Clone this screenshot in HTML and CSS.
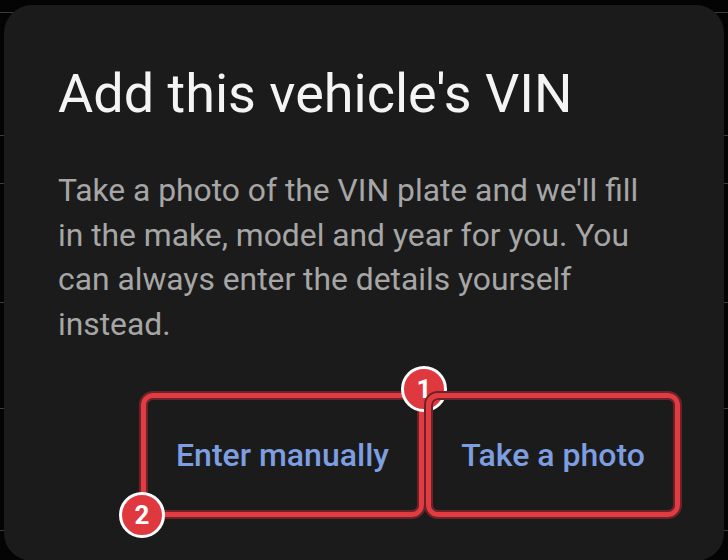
FILE: index.html
```html
<!DOCTYPE html>
<html lang="en">
<head>
<meta charset="utf-8">
<title>Add VIN</title>
<link rel="stylesheet" href="styles.css">
</head>
<body>
  <div class="screen">
    <div class="backdrop">
      <div class="row row-head"></div>
      <div class="row row-a"></div>
      <div class="row row-b"></div>
      <div class="row row-c"></div>
      <div class="row row-d"></div>
      <div class="row row-e"></div>
    </div>

    <section class="dialog" role="dialog" aria-labelledby="dlg-title">
      <h1 class="dialog-title" id="dlg-title">Add this vehicle's VIN</h1>
      <p class="dialog-body">Take a photo of the VIN plate and we'll fill in the make, model and year for you. You can always enter the details yourself instead.</p>
      <div class="dialog-actions">
        <button class="action action-manual" type="button">
          Enter manually
          <span class="badge badge-top">1</span>
          <span class="badge badge-bottom">2</span>
        </button>
        <button class="action action-photo" type="button">Take a photo</button>
      </div>
    </section>
  </div>
</body>
</html>
```

FILE: styles.css
```css
html, body {
  margin: 0;
  padding: 0;
  background: #000;
}

body {
  font-family: Roboto, "Noto Sans", sans-serif;
}

.screen {
  position: relative;
  width: 728px;
  height: 560px;
  overflow: hidden;
  background: #040404;
}

/* list rows of the page underneath the dialog */
.backdrop {
  display: flex;
  flex-direction: column;
}

.row {
  border-bottom: 1px solid #3c3c3c;
}

.row-head { height: 12px; }
.row-a { height: 122px; }
.row-b { height: 47px; }
.row-c { height: 118px; }
.row-d { height: 105px; }
.row-e { height: 121px; }

.dialog {
  position: absolute;
  left: 4px;
  top: 5px;
  width: 720px;
  height: 556px;
  box-sizing: border-box;
  padding: 57px 44px 0 54px;
  background: #1b1b1b;
  border-radius: 28px;
  display: flex;
  flex-direction: column;
}

.dialog-title {
  margin: 0;
  font-size: 54px;
  line-height: 64px;
  font-weight: 400;
  color: #f4f4f4;
}

.dialog-body {
  margin: 42px 0 0 0;
  max-width: 590px;
  font-size: 31.8px;
  line-height: 44.7px;
  color: #a6a6a6;
}

.dialog-actions {
  display: flex;
  justify-content: flex-end;
  gap: 2px;
  margin-top: 46px;
}

.action {
  position: relative;
  height: 124px;
  box-sizing: border-box;
  border: 5px solid #e33b42;
  border-radius: 12px;
  box-shadow: 0 0 0 2px #6a2328, inset 0 0 0 2px #6a2328;
  background: transparent;
  font-family: inherit;
  font-size: 32px;
  font-weight: 500;
  color: #7d9ee0;
  padding: 0;
  cursor: pointer;
}

.action-manual { width: 283px; }
.action-photo { width: 254px; }

.badge {
  position: absolute;
  width: 46px;
  height: 46px;
  box-sizing: border-box;
  border: 3px solid #fff;
  border-radius: 50%;
  background: #e0383f;
  color: #fff;
  font-size: 26px;
  font-weight: 700;
  display: flex;
  align-items: center;
  justify-content: center;
}

.badge-top {
  top: -32px;
  right: -28px;
}

.badge-bottom {
  bottom: -26px;
  left: -27px;
}
```
